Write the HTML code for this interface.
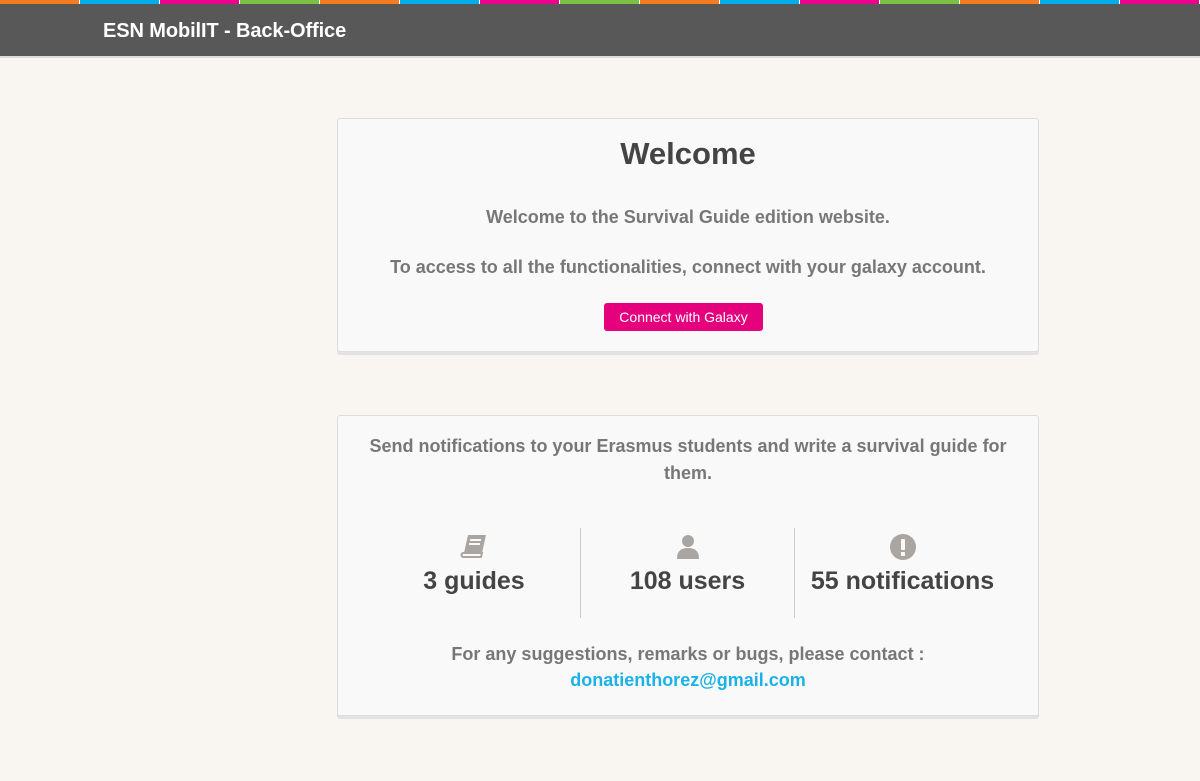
<!DOCTYPE html>
<html><head><meta charset="utf-8"><style>
*{margin:0;padding:0;box-sizing:border-box}
body{width:1200px;height:781px;background:#f9f6f2;font-family:"Liberation Sans","DejaVu Sans",sans-serif;overflow:hidden;position:relative}
.bar{position:absolute;top:0;left:0;width:1200px;height:4px;display:flex}
.bar div{width:80px;height:4px;border-right:1px solid #fff}
.o{background:#f47b20}.b{background:#00aeef}.p{background:#ec008c}.g{background:#7ac143}
.hdr{position:absolute;top:4px;left:0;width:1200px;height:54px;background:#585858;border-bottom:2px solid #ddd}
.hdr span{position:absolute;left:103px;top:16px;color:#fff;font-size:20px;font-weight:bold;letter-spacing:-0.1px}
.card{position:absolute;left:337px;width:702px;background:#f9f9f9;border:1px solid #ddd;border-radius:3px;box-shadow:0 3px 0 #e2e2e2;text-align:center;color:#777;font-weight:bold}
.t{color:#444;font-size:31px;position:absolute;width:100%;top:17px}
.l{position:absolute;width:100%;font-size:18px}
.btn{position:absolute;left:266px;top:184px;width:159px;height:28px;background:#e5007e;border-radius:3px;color:#fff;font-weight:normal;font-size:14px;line-height:28px}
.st{position:absolute;top:110px;height:92px;text-align:center;color:#444;font-size:25px}
.st svg{display:block;margin:8px auto 7px}
.sep{position:absolute;top:112px;width:1px;height:90px;background:#ccc}
a{color:#1ab2e8;text-decoration:none}
</style></head><body>
<div class="bar"><div class="o"></div><div class="b"></div><div class="p"></div><div class="g"></div><div class="o"></div><div class="b"></div><div class="p"></div><div class="g"></div><div class="o"></div><div class="b"></div><div class="p"></div><div class="g"></div><div class="o"></div><div class="b"></div><div class="p"></div></div>
<div class="hdr"><span>ESN MobilIT - Back-Office</span></div>
<div class="card" style="top:118px;height:234px">
<div class="t">Welcome</div>
<div class="l" style="top:88px">Welcome to the Survival Guide edition website.</div>
<div class="l" style="top:138px">To access to all the functionalities, connect with your galaxy account.</div>
<div class="btn">Connect with Galaxy</div>
</div>
<div class="card" style="top:415px;height:301px">
<div class="l" style="top:17px;line-height:27px;padding:0 26px">Send notifications to your Erasmus students and write a survival guide for them.</div>
<div class="st" style="left:30px;width:212px"><svg width="30" height="26" viewBox="0 0 30 26"><path d="M9 1h18l-4 18H5z" fill="#aaa5a0"/><path d="M5 19h18l-1 4H4a2 2 0 0 1 1-4z" fill="none" stroke="#aaa5a0" stroke-width="2"/><path d="M11 6h11M10 10h11" stroke="#f9f9f9" stroke-width="2"/></svg>3 guides</div>
<div class="sep" style="left:242px"></div>
<div class="st" style="left:243px;width:213px"><svg width="26" height="26" viewBox="0 0 26 26"><circle cx="13" cy="7" r="6" fill="#aaa5a0"/><path d="M2 25c0-8 4-11 11-11s11 3 11 11z" fill="#aaa5a0"/></svg>108 users</div>
<div class="sep" style="left:456px"></div>
<div class="st" style="left:457px;width:215px"><svg width="26" height="26" viewBox="0 0 26 26"><circle cx="13" cy="13" r="13" fill="#aaa5a0"/><rect x="11" y="5" width="4" height="11" rx="1" fill="#f9f9f9"/><rect x="11" y="18" width="4" height="4" fill="#f9f9f9"/></svg>55 notifications</div>
<div class="l" style="top:225px;line-height:26px">For any suggestions, remarks or bugs, please contact :<br><a>donatienthorez@gmail.com</a></div>
</div>
</body></html>
